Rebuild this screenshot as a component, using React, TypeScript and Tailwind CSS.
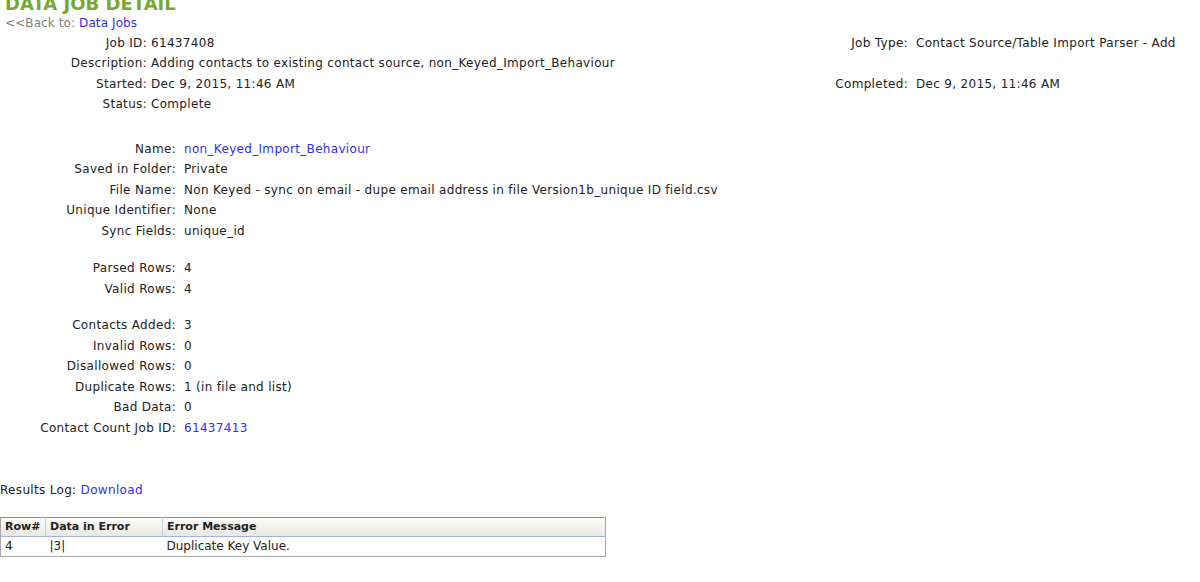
import React from "react";

const topRows: [string, string, string?, string?][] = [
  ["Job ID:", "61437408", "Job Type:", "Contact Source/Table Import Parser - Add"],
  ["Description:", "Adding contacts to existing contact source, non_Keyed_Import_Behaviour"],
  ["Started:", "Dec 9, 2015, 11:46 AM", "Completed:", "Dec 9, 2015, 11:46 AM"],
  ["Status:", "Complete"],
];

type Field = { label: string; value: string; link?: boolean };

const fileFields: Field[] = [
  { label: "Name:", value: "non_Keyed_Import_Behaviour", link: true },
  { label: "Saved in Folder:", value: "Private" },
  { label: "File Name:", value: "Non Keyed - sync on email - dupe email address in file Version1b_unique ID field.csv" },
  { label: "Unique Identifier:", value: "None" },
  { label: "Sync Fields:", value: "unique_id" },
];

const parseFields: Field[] = [
  { label: "Parsed Rows:", value: "4" },
  { label: "Valid Rows:", value: "4" },
];

const resultFields: Field[] = [
  { label: "Contacts Added:", value: "3" },
  { label: "Invalid Rows:", value: "0" },
  { label: "Disallowed Rows:", value: "0" },
  { label: "Duplicate Rows:", value: "1 (in file and list)" },
  { label: "Bad Data:", value: "0" },
  { label: "Contact Count Job ID:", value: "61437413", link: true },
];

function FieldBlock({ fields, className }: { fields: Field[]; className?: string }) {
  return (
    <div className={`grid grid-cols-[176px_1fr] gap-x-[8px] ${className ?? ""}`}>
      {fields.map((f) => (
        <React.Fragment key={f.label}>
          <div className="text-right whitespace-nowrap">{f.label}</div>
          <div className={f.link ? "whitespace-nowrap text-[#2f2ff0]" : "whitespace-nowrap"}>{f.value}</div>
        </React.Fragment>
      ))}
    </div>
  );
}

export default function App() {
  return (
    <div className="min-h-screen overflow-hidden bg-white text-[12px] tracking-[0.32px] text-[#222] font-['Verdana','DejaVu_Sans',sans-serif]">
      <h1 className="-mt-[7px] pl-[5px] text-[18px] font-bold leading-[22px] tracking-normal text-[#76a832]">DATA JOB DETAIL</h1>
      <div className="pl-[5px] leading-[16px] tracking-[0.1px]">
        <span className="text-[#808080]">&lt;&lt;Back to: </span>
        <span className="text-[#2f2ff0]">Data Jobs</span>
      </div>

      {/* job summary */}
      <div className="mt-[2px] grid grid-cols-[147px_679px_82px_1fr] leading-[20.4px]">
        {topRows.map(([l, v, rl, rv]) => (
          <React.Fragment key={l}>
            <div className="text-right whitespace-nowrap">{l}</div>
            <div className="pl-[4px] whitespace-nowrap">{v}</div>
            <div className="text-right whitespace-nowrap">{rl ?? ""}</div>
            <div className="pl-[8px] whitespace-nowrap">{rv ?? ""}</div>
          </React.Fragment>
        ))}
      </div>

      <div className="leading-[20.5px]">
        <FieldBlock fields={fileFields} className="mt-[24px]" />
        <FieldBlock fields={parseFields} className="mt-[17px]" />
        <FieldBlock fields={resultFields} className="mt-[16px]" />
      </div>

      <div className="mt-[44px] leading-[16px]">
        Results Log: <span className="text-[#2f2ff0]">Download</span>
      </div>

      <table className="mt-[19px] w-[606px] border-collapse border border-[#a8a8a8] border-t-[#8c8c8c] tracking-normal">
        <thead>
          <tr className="border-b border-[#9db3e4] bg-gradient-to-b from-[#fbfbf8] to-[#e9e8e1] text-[11px] leading-[18px]">
            <th className="w-[45px] border-r border-[#c9cfe0] pl-[4px] text-left font-bold">Row#</th>
            <th className="w-[117px] border-r border-[#c9cfe0] pl-[4px] text-left font-bold">Data in Error</th>
            <th className="pl-[4px] text-left font-bold">Error Message</th>
          </tr>
        </thead>
        <tbody>
          <tr className="text-[12px] leading-[19px]">
            <td className="pl-[4px]">4</td>
            <td className="pl-[4px]">|3|</td>
            <td className="pl-[4px]">Duplicate Key Value.</td>
          </tr>
        </tbody>
      </table>
    </div>
  );
}
